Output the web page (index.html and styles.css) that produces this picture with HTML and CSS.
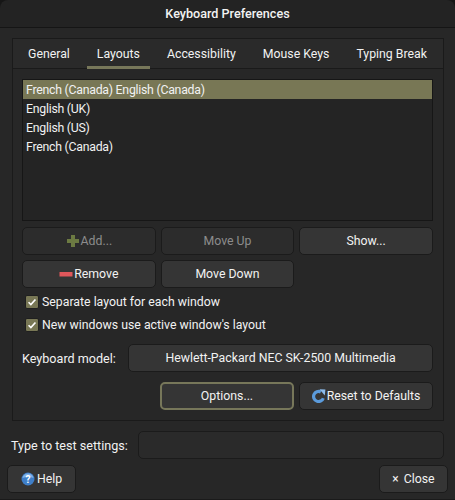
FILE: index.html
```html
<!DOCTYPE html>
<html lang="en">
<head>
  <meta charset="UTF-8">
  <meta name="viewport" content="width=device-width, initial-scale=1.0">
  <title>Keyboard Preferences</title>
  <link rel="stylesheet" href="styles.css">
</head>
<body>

  <div class="window">
    <div class="titlebar">Keyboard Preferences</div>

    <div class="content">
      <div class="notebook">
        <div class="tabs">
          <div class="tab">General</div>
          <div class="tab active">Layouts</div>
          <div class="tab">Accessibility</div>
          <div class="tab">Mouse Keys</div>
          <div class="tab">Typing Break</div>
        </div>

        <div class="page">
          <!-- Layout list -->
          <div class="layout-list">
            <div class="layout-row selected">French (Canada) English (Canada)</div>
            <div class="layout-row">English (UK)</div>
            <div class="layout-row">English (US)</div>
            <div class="layout-row">French (Canada)</div>
          </div>

          <div class="button-grid">
            <button class="btn" disabled>
              <svg class="icon" viewBox="0 0 14 14"><path d="M5 1h4v4h4v4H9v4H5V9H1V5h4z" fill="#6c7a42"/></svg>Add...
            </button>
            <button class="btn" disabled>Move Up</button>
            <button class="btn">Show...</button>
            <button class="btn">
              <svg class="icon" viewBox="0 0 14 14"><rect x="0.5" y="5" width="13" height="4.5" fill="#e0575b"/></svg>Remove
            </button>
            <button class="btn">Move Down</button>
          </div>

          <div class="checks">
            <label class="check">
              <span class="checkbox"><svg viewBox="0 0 14 14"><path d="M3 7.3 5.7 10 11 4" fill="none" stroke="#fff" stroke-width="1.9"/></svg></span>
              Separate layout for each window
            </label>
            <label class="check">
              <span class="checkbox"><svg viewBox="0 0 14 14"><path d="M3 7.3 5.7 10 11 4" fill="none" stroke="#fff" stroke-width="1.9"/></svg></span>
              New windows use active window's layout
            </label>
          </div>

          <div class="model-row">
            <span class="field-label">Keyboard model:</span>
            <button class="btn model-btn">Hewlett-Packard NEC SK-2500 Multimedia</button>
          </div>

          <div class="options-row">
            <button class="btn focused">Options...</button>
            <button class="btn">
              <svg class="icon reset-icon" viewBox="0 0 14 14">
                <path d="M11.3 9.2A5 5 0 1 1 8.8 3" fill="none" stroke="#5b9bdc" stroke-width="3.2"/>
                <path d="M7.5 0.2 13.4 0.4 12.8 6.4z" fill="#8dbcec"/>
              </svg>Reset to Defaults
            </button>
          </div>
        </div>
      </div>

      <div class="test-row">
        <span class="field-label">Type to test settings:</span>
        <div class="entry"></div>
      </div>

      <div class="footer">
        <button class="btn footer-btn">
          <svg class="icon help-icon" viewBox="0 0 14 14">
            <circle cx="7" cy="7" r="6.5" fill="#3f7fc9"/>
            <path d="M1.5 6A5.6 5.6 0 0 1 12.5 6C9 4.5 5 4.5 1.5 6z" fill="#7fb0e6"/>
            <text x="7" y="11" text-anchor="middle" class="help-mark">?</text>
          </svg>Help
        </button>
        <button class="btn footer-btn close-btn"><span class="close-mark">×</span>Close</button>
      </div>
    </div>
  </div>

</body>
</html>
```

FILE: styles.css
```css
body {
  margin: 0;
  background-color: #161616;
  font-family: Roboto, sans-serif;
  font-size: 12.3px;
  color: #f2f2f2;
}

.window {
  width: 455px;
  height: 500px;
  box-sizing: border-box;
  display: flex;
  flex-direction: column;
  border-bottom: 1px solid #1a1a1a;
}

.titlebar {
  height: 27px;
  line-height: 27px;
  text-align: center;
  font-size: 12.6px;
  font-weight: 500;
  background-color: #232323;
  border-bottom: 1px solid #151515;
  border-top-left-radius: 8px;
  border-top-right-radius: 8px;
  flex-shrink: 0;
}

.content {
  flex: 1;
  padding: 10px 7px 0;
  display: flex;
  flex-direction: column;
  background-color: #272727;
}

.notebook {
  margin: 0 4px 0 5px;
  height: 383px;
  box-sizing: border-box;
  border: 1px solid #1a1a1a;
}

.tabs {
  display: flex;
  height: 30px;
  box-sizing: border-box;
  padding-left: 5px;
  gap: 7px;
  border-bottom: 1px solid #1a1a1a;
  background-color: #2a2a2a;
}

.tab {
  padding: 0 10px;
  line-height: 30px;
  height: 30px;
  box-sizing: border-box;
  white-space: nowrap;
}

.tab.active {
  border-bottom: 3px solid #77775a;
}

.page {
  padding: 10px 10px 0 9px;
}

.layout-list {
  height: 142px;
  box-sizing: border-box;
  border: 1px solid #161616;
  background-color: #242424;
}

.layout-row {
  height: 19px;
  line-height: 21px;
  padding-left: 3px;
  letter-spacing: -0.25px;
}

.layout-row.selected {
  background-color: #787755;
}

.button-grid {
  display: grid;
  grid-template-columns: repeat(3, 1fr);
  gap: 5px;
  margin-top: 6px;
}

.btn {
  height: 28px;
  padding: 0;
  display: flex;
  align-items: center;
  justify-content: center;
  box-sizing: border-box;
  font-family: inherit;
  font-size: inherit;
  color: #f2f2f2;
  background-color: #353535;
  border: 1px solid #1b1b1b;
  border-radius: 5px;
}

.btn:disabled {
  color: #8c8c8c;
  background-color: #2c2c2c;
}

.icon {
  width: 14px;
  height: 14px;
  margin-right: 1px;
}

.checks {
  margin-top: 7px;
  padding-left: 3px;
  display: flex;
  flex-direction: column;
  gap: 9px;
}

.check {
  display: flex;
  align-items: center;
  gap: 3px;
  height: 14px;
}

.checkbox {
  width: 14px;
  height: 14px;
  box-sizing: border-box;
  display: block;
  border-radius: 2px;
  background-color: #787755;
  border: 1px solid #1f1f1f;
}

.checkbox svg {
  display: block;
  width: 12px;
  height: 12px;
}

.model-row {
  display: flex;
  align-items: center;
  margin-top: 12px;
}

.field-label {
  font-size: 12.6px;
  white-space: nowrap;
}

.model-row .field-label {
  width: 106px;
}

.model-btn {
  flex: 1;
}

.options-row {
  display: flex;
  justify-content: flex-end;
  gap: 5px;
  margin-top: 10px;
}

.options-row .btn {
  width: 134px;
}

.btn.focused {
  border: 2px solid #77775a;
}

.test-row {
  display: flex;
  align-items: center;
  margin-top: 10px;
  padding: 0 4px;
}

.test-row .field-label {
  width: 127px;
}

.entry {
  flex: 1;
  height: 28px;
  box-sizing: border-box;
  background-color: #2a2a2a;
  border: 1px solid #1b1b1b;
  border-radius: 5px;
}

.footer {
  display: flex;
  justify-content: space-between;
  margin-top: 6px;
}

.footer-btn {
  width: 69px;
}

.help-icon {
  margin-right: 2px;
}

.help-mark {
  font-size: 10px;
  font-weight: 700;
  fill: #fff;
}

.close-mark {
  margin-right: 5px;
  font-size: 12px;
}
```
